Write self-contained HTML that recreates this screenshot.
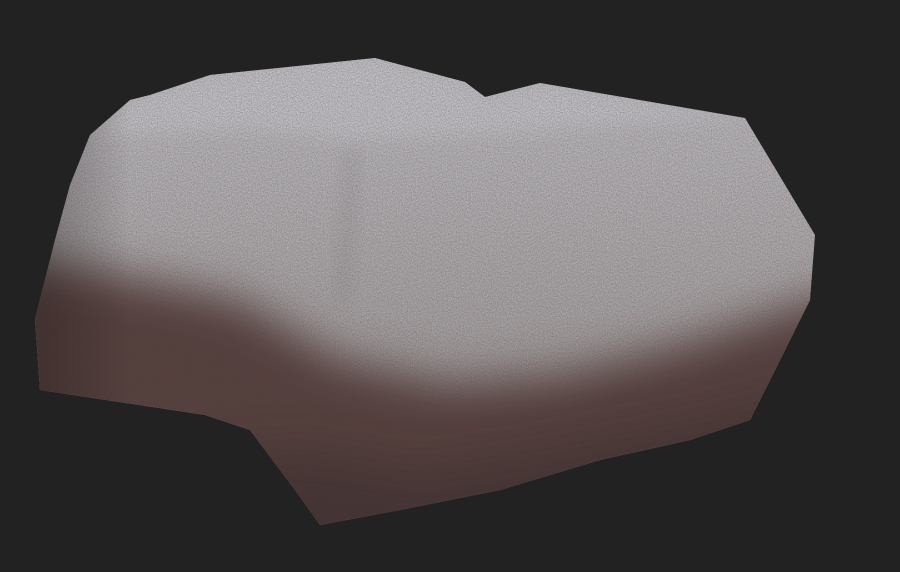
<!DOCTYPE html>
<html><head><meta charset="utf-8"><style>
html,body{margin:0;padding:0;background:#222222;width:900px;height:572px;overflow:hidden}
</style></head><body>
<svg width="900" height="572" viewBox="0 0 900 572" xmlns="http://www.w3.org/2000/svg">
<defs>
<linearGradient id="g" x1="0" y1="60" x2="0" y2="400" gradientUnits="userSpaceOnUse">
<stop offset="0" stop-color="#c6cad0"/>
<stop offset="0.5" stop-color="#b6b8bb"/>
<stop offset="1" stop-color="#a5a4a4"/>
</linearGradient>
<linearGradient id="gl" x1="40" y1="0" x2="130" y2="0" gradientUnits="userSpaceOnUse">
<stop offset="0" stop-color="#000" stop-opacity="0.3"/>
<stop offset="1" stop-color="#000" stop-opacity="0"/>
</linearGradient>
<clipPath id="c"><polygon points="150,95 210,75 375,58 465,82 485,97 540,83 745,118 815,235 810,300 775,370 750,420 690,440 600,460 500,490 400,510 320,525 295,490 250,430 205,415 40,390 35,320 55,240 70,185 90,135 130,100"/></clipPath>
<filter id="b" x="-20%" y="-20%" width="140%" height="140%"><feGaussianBlur stdDeviation="22"/></filter>
<filter id="b2" x="-20%" y="-20%" width="140%" height="140%"><feGaussianBlur stdDeviation="8"/></filter>
<filter id="n" x="0" y="0" width="100%" height="100%">
<feTurbulence type="fractalNoise" baseFrequency="0.8" numOctaves="3" seed="5"/>
<feColorMatrix values="0 0 0 0 0.1  0 0 0 0 0.05  0 0 0 0 0.05  0 0 0 0.6 -0.08"/>
<feComposite in2="SourceGraphic" operator="in"/>
</filter>
</defs>
<g clip-path="url(#c)">
<rect x="0" y="0" width="900" height="572" fill="url(#g)"/>
<polygon fill="#cfd3d9" opacity="0.7" points="130,100 210,75 375,58 465,82 485,97 540,83 745,118 600,125 520,132 355,140 250,130 100,135" filter="url(#b2)"/>
<polygon fill="#000" opacity="0.06" points="345,150 360,150 350,300 335,300" filter="url(#b2)"/>
<polygon fill="#52413e" filter="url(#b)" points="0,255 120,275 240,300 340,360 450,385 560,375 680,345 830,295 900,290 900,600 0,600"/>
<polygon fill="#3b2e2d" opacity="0.8" filter="url(#b)" points="200,460 300,450 420,470 550,450 700,420 850,380 900,600 200,600"/>
<rect x="0" y="0" width="160" height="572" fill="url(#gl)"/>
<rect x="0" y="0" width="900" height="572" fill="#000" filter="url(#n)"/>
</g>
</svg>
</body></html>
